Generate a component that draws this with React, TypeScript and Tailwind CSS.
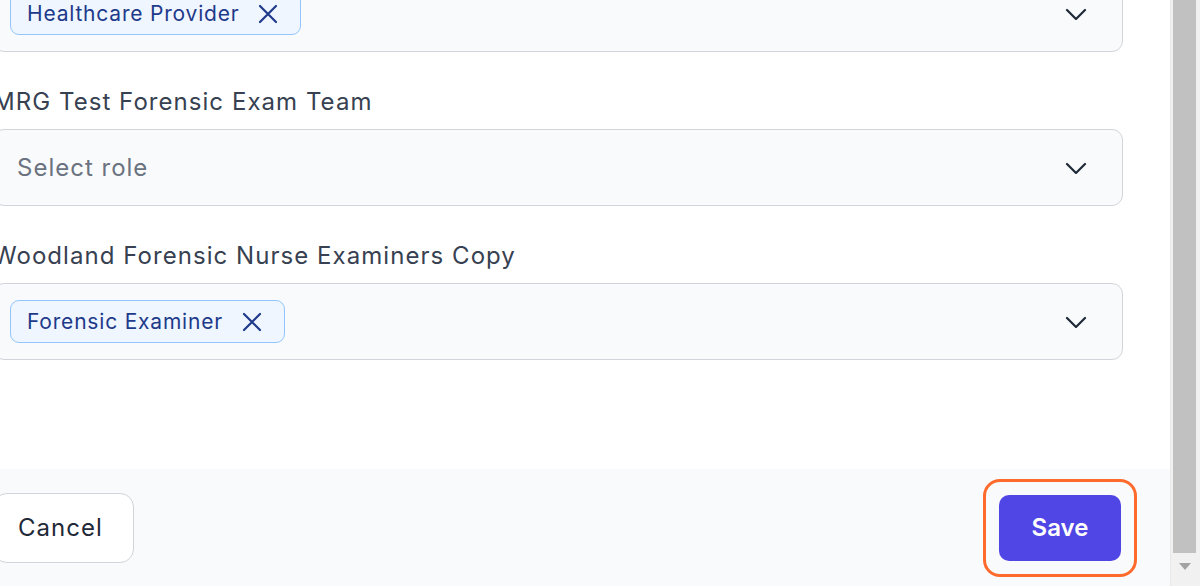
type Field = {
  label?: string;
  roles: string[];
};

const fields: Field[] = [
  { roles: ["Healthcare Provider"] },
  { label: "MRG Test Forensic Exam Team", roles: [] },
  { label: "Woodland Forensic Nurse Examiners Copy", roles: ["Forensic Examiner"] },
];

function XIcon() {
  return (
    <svg width="20" height="20" viewBox="0 0 20 20" fill="none" stroke="currentColor" strokeWidth={2.2} strokeLinecap="round">
      <path d="M2 2l16 16M18 2L2 18" />
    </svg>
  );
}

function Chevron() {
  return (
    <svg width="22" height="12" viewBox="0 0 22 12" fill="none" stroke="#1f2937" strokeWidth={2.2} strokeLinecap="round" strokeLinejoin="round">
      <path d="M2 2l9 9 9-9" />
    </svg>
  );
}

function RoleChip({ name }: { name: string }) {
  return (
    <span className="flex h-[43px] items-center gap-[19px] rounded-[9px] border border-[#93c5fd] bg-[#eff6ff] pl-[16px] pr-[22px] text-[21px] tracking-[0.8px] text-[#1e3a8a]">
      {name}
      <span className="text-[#1e3a8a]">
        <XIcon />
      </span>
    </span>
  );
}

function RoleSelect({ roles }: { roles: string[] }) {
  return (
    <div className="flex h-[77px] items-center justify-between rounded-[11px] border border-[#d1d5db] bg-[#f9fafb] pr-[35px]">
      {roles.length > 0 ? (
        <div className="flex gap-2 pl-[16px]">
          {roles.map((r) => (
            <RoleChip key={r} name={r} />
          ))}
        </div>
      ) : (
        <span className="pl-[23px] text-[24px] tracking-[1px] text-[#6b7280]">Select role</span>
      )}
      <Chevron />
    </div>
  );
}

export default function App() {
  return (
    <div
      className="flex h-[586px] w-[1200px] overflow-hidden bg-white"
      style={{ fontFamily: "Inter, 'Liberation Sans', sans-serif" }}
    >
      <div className="flex min-w-0 flex-1 flex-col">
        {/* form fields, scrolled part way */}
        <div className="ml-[-7px] mt-[-25px] flex flex-1 flex-col gap-[36px] pr-[47px]">
          {fields.map((f, i) => (
            <div key={i} className="flex flex-col">
              {f.label && (
                <label className="mb-[13px] whitespace-nowrap text-[24px] leading-[28px] tracking-[1.05px] text-[#374151]">
                  {f.label}
                </label>
              )}
              <RoleSelect roles={f.roles} />
            </div>
          ))}
        </div>

        {/* footer */}
        <div className="ml-[-7px] flex h-[117px] shrink-0 items-center justify-between bg-[#f9fafb] pr-[49px]">
          <button className="flex h-[70px] w-[141px] items-center rounded-[14px] border border-[#d1d5db] bg-white pl-[24px] text-[24px] tracking-[1px] text-[#1f2937]">
            Cancel
          </button>
          <div className="relative">
            <span className="pointer-events-none absolute -inset-[16px] rounded-[17px] border-[3px] border-[#ff6b2c]" />
            <button className="flex h-[66px] w-[122px] items-center justify-center rounded-[10px] bg-[#4f46e5] text-[24px] font-semibold text-white">
              Save
            </button>
          </div>
        </div>
      </div>

      {/* scrollbar */}
      <div className="flex w-[30px] shrink-0 flex-col border-l border-[#e8e8e8] bg-[#f1f1f1] pl-[2px] pr-[4px]">
        <div className="mb-[10px] flex-1 bg-[#c1c1c1]" />
        <div className="flex h-[23px] items-start justify-center">
          <svg width="12" height="7" viewBox="0 0 12 7">
            <path d="M0 0h12L6 7z" fill="#a3a3a3" />
          </svg>
        </div>
      </div>
    </div>
  );
}
